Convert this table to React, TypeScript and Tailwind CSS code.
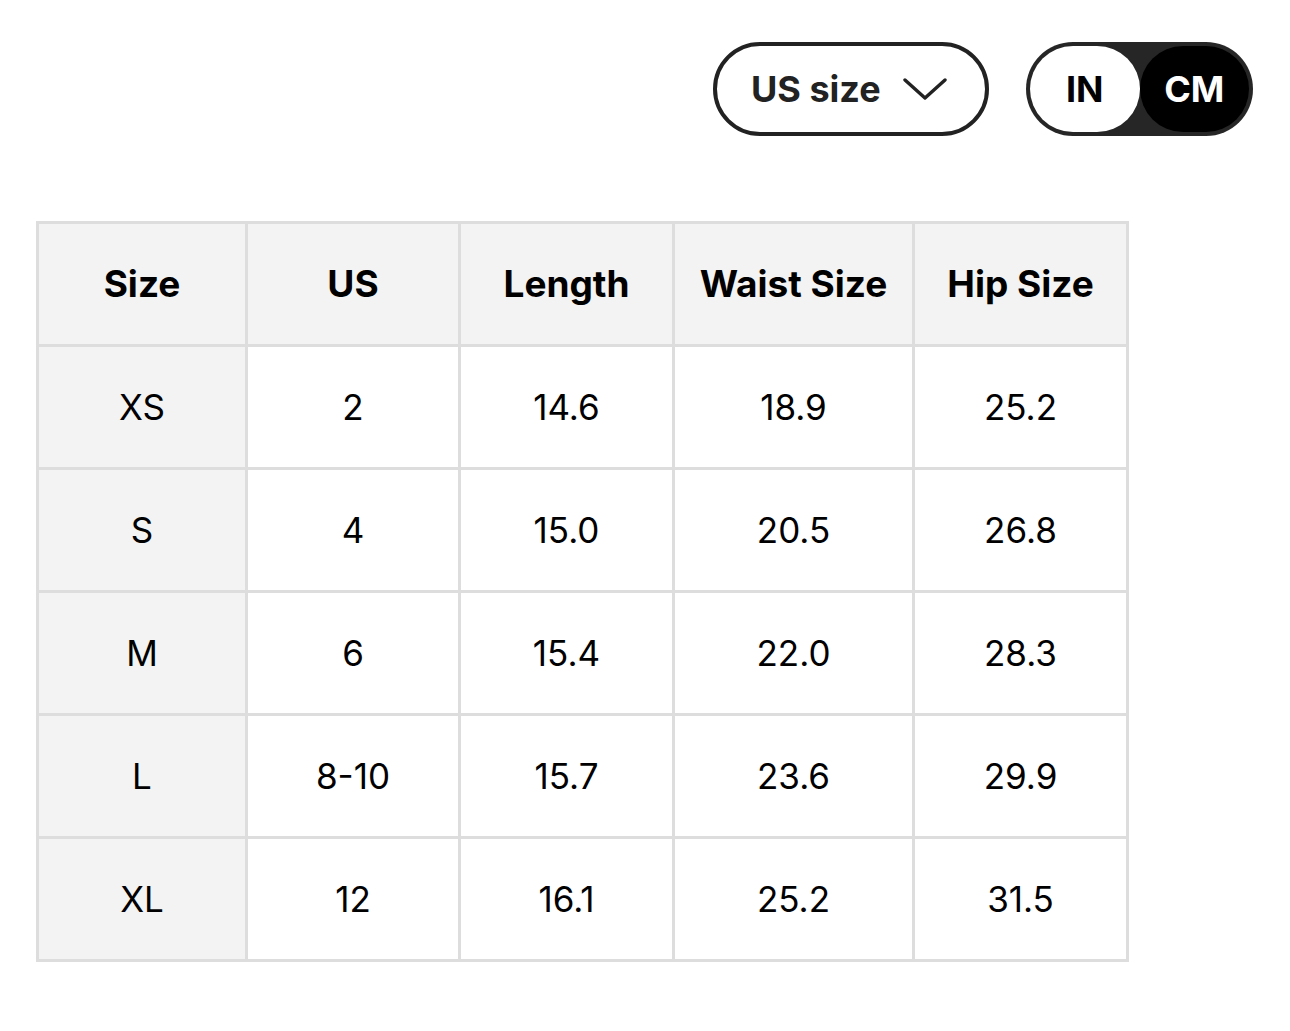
import * as React from 'react';

const HEADERS = ['Size', 'US', 'Length', 'Waist Size', 'Hip Size'];

const ROWS: string[][] = [
  ['XS', '2', '14.6', '18.9', '25.2'],
  ['S', '4', '15.0', '20.5', '26.8'],
  ['M', '6', '15.4', '22.0', '28.3'],
  ['L', '8-10', '15.7', '23.6', '29.9'],
  ['XL', '12', '16.1', '25.2', '31.5'],
];

function ChevronDown() {
  return (
    <svg width="44" height="24" viewBox="0 0 44 24" fill="none" className="shrink-0">
      <polyline
        points="2,3 22,21 42,3"
        stroke="#222"
        strokeWidth="3.4"
        strokeLinecap="round"
        strokeLinejoin="round"
      />
    </svg>
  );
}

/** Size-system dropdown trigger + IN/CM unit toggle. */
function Controls() {
  const [unit, setUnit] = React.useState<'IN' | 'CM'>('CM');

  return (
    <div className="flex items-center justify-end gap-[37px] pr-[37px] pt-[42px]">
      <button
        type="button"
        className="flex h-[94px] w-[276px] items-center gap-[22px] rounded-full border-[4px] border-[#222] bg-white pl-[34px] text-[36px] font-bold text-[#222]"
      >
        <span>US size</span>
        <ChevronDown />
      </button>

      <div className="flex h-[94px] w-[227px] items-center rounded-full bg-[#262626] p-[4px]">
        {(['IN', 'CM'] as const).map((u) => (
          <button
            key={u}
            type="button"
            onClick={() => setUnit(u)}
            className={
              unit === u
                ? 'flex h-full flex-1 items-center justify-center rounded-full bg-black text-[36px] font-bold text-white'
                : 'flex h-full flex-1 items-center justify-center rounded-full bg-white text-[36px] font-bold text-black'
            }
          >
            {u}
          </button>
        ))}
      </div>
    </div>
  );
}

export default function App() {
  return (
    <div
      className="min-h-[1031px] bg-white"
      style={{ fontFamily: 'Inter, "Noto Sans", sans-serif' }}
    >
      <Controls />

      <div className="pl-[36px] pt-[85px]">
        <div className="grid w-[1093px] grid-cols-[206px_210px_211px_237px_211px] gap-[3px] bg-[#dddddd] p-[3px]">
          {HEADERS.map((h) => (
            <div
              key={h}
              className="flex h-[120px] items-center justify-center bg-[#f3f3f3] text-[37px] font-bold text-black"
            >
              {h}
            </div>
          ))}
          {ROWS.map((row) =>
            row.map((cell, i) => (
              <div
                key={`${row[0]}-${i}`}
                className={
                  i === 0
                    ? 'flex h-[120px] items-center justify-center bg-[#f3f3f3] text-[35px] text-black'
                    : 'flex h-[120px] items-center justify-center bg-white text-[35px] text-black'
                }
              >
                {cell}
              </div>
            )),
          )}
        </div>
      </div>
    </div>
  );
}
